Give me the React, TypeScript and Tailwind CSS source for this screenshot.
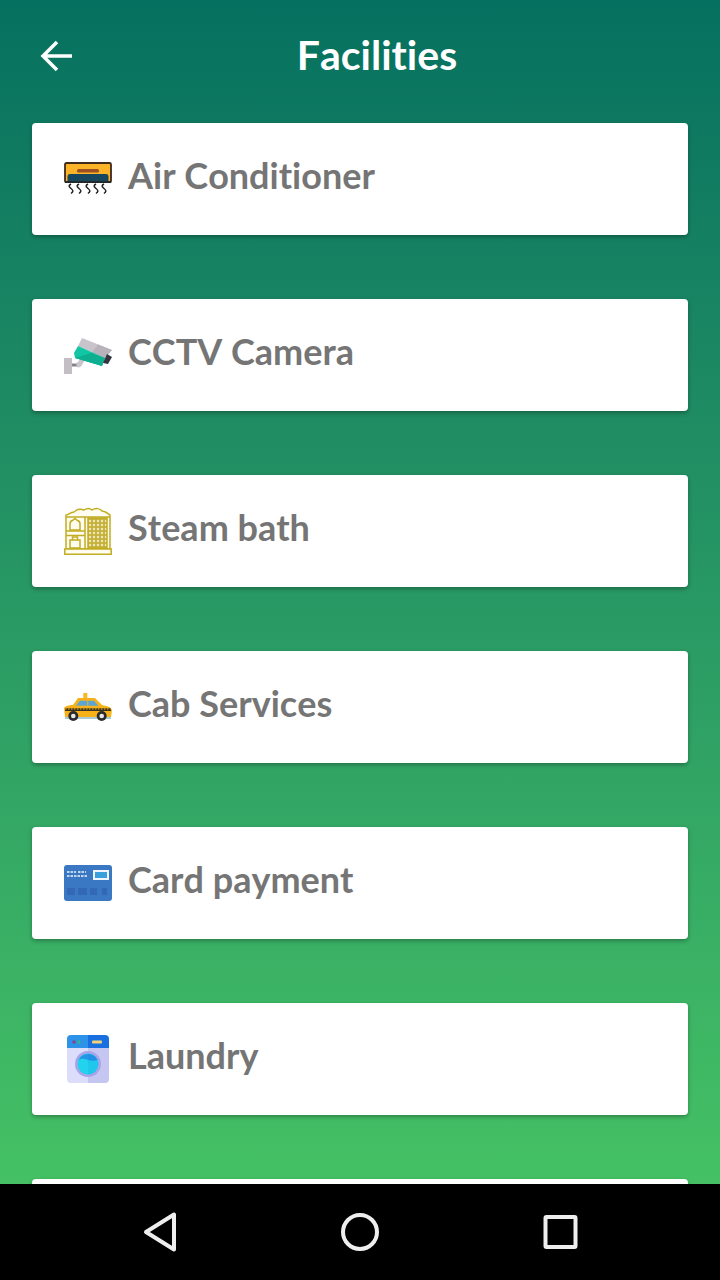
import React from 'react';

const AirConditionerIcon = () => (
  <svg width="48" height="34" viewBox="0 0 48 34">
    <path d="M1 2.500A1.500 1.500 0 0 1 2.500 1h43A1.500 1.500 0 0 1 47 2.500V19a1 1 0 0 1-1 1H2a1 1 0 0 1-1-1z" fill="#fbb327" stroke="#3f2a1c" strokeWidth="1.800" />
    <rect x="13" y="7" width="22" height="3.500" rx="1.500" fill="#9b4f22" />
    <path d="M3.500 20v-5.500a2.500 2.500 0 0 1 2.500-2.500h36a2.500 2.500 0 0 1 2.500 2.500V20z" fill="#17465f" />
    <path d="M1 20h46" stroke="#23282b" strokeWidth="2" />
    {[6, 14, 23, 31, 39].map((x) => (
      <path key={x} d={`M${x + 1} 22c-2.500 1.500-2.500 2.500 0 4.500s2.500 3 0 5`} fill="none" stroke="#242424" strokeWidth="1.500" />
    ))}
  </svg>
);

const CctvIcon = () => (
  <svg width="48" height="38" viewBox="0 0 48 38">
    <rect x="0" y="22" width="8" height="16" fill="#c3bdc4" />
    <path d="M8 29h7" stroke="#85828a" strokeWidth="3" />
    <path d="M13 31c2 1 4 0 5-2l4-7-4-2-4 6-2 1z" fill="#c9c5cb" />
    <path d="M18 2l30 12-7 8-27-12z" fill="#c9c3cb" />
    <path d="M34 8.500l14 5.500-7 8-13-5.500z" fill="#b8b2bb" />
    <path d="M14 10l-4 7 1 5 27 8 3-8z" fill="#12c6a4" />
    <path d="M11 22l27 8 3-8-14-5z" fill="#0daf90" />
    <path d="M43 18l5 3-4 7-5-1z" fill="#35353f" />
  </svg>
);

const SteamBathIcon = () => (
  <svg width="48" height="48" viewBox="0 0 48 48" fill="none" stroke="#c2ac22" strokeWidth="1.500">
    <defs>
      <pattern id="lattice" width="4" height="4" patternUnits="userSpaceOnUse">
        <rect width="4" height="4" fill="#c4b03a" stroke="none" />
        <path d="M2 .6L3.400 2 2 3.400 .6 2z" fill="#f6f1cf" stroke="none" />
      </pattern>
    </defs>
    <path d="M2 42V8c3 0 4-3 8-3 3-3 7-3 10-2 3-2 6-2 8 0 3-2 8-2 10 1 4 0 6 3 8 4v34z" fill="#fffdf0" />
    <path d="M2 10h44M21 10v32M2 24h19M2 28.500h19" />
    <rect x="24" y="11" width="19" height="30" fill="url(#lattice)" />
    <path d="M6 23v-6a3.500 3.500 0 0 1 2.500-3.500l2.500-2 2.500 2A3.500 3.500 0 0 1 16 17v6z" />
    <path d="M6 41v-8h10v8zM8.500 33v-3h5v3" />
    <path d="M.8 42h46.400v5.200H.8z" fill="#fffdf0" />
  </svg>
);

const TaxiIcon = () => (
  <svg width="48" height="28" viewBox="0 0 48 28">
    <rect x="19.300" y="0" width="4" height="6" fill="#f9b91d" />
    <path d="M0 15c1-2 5-3 9-3l5-7h17l7 7c5 1 9 2 10 5l-1 7H1z" fill="#f7b21b" />
    <path d="M12 12.500l4-4.800h7.300v5zM24.300 7.700H30l4.300 5H24.300z" fill="#5aa5d3" />
    <path d="M1 15.300h46V18H1z" fill="#3b3220" />
    <path d="M1 16h46" stroke="#f7b21b" strokeWidth="1" strokeDasharray="1.500 1.500" />
    <path d="M1 24h46v2H1z" fill="#a6cad6" />
    <circle cx="9.300" cy="23" r="5" fill="#2b2b2b" />
    <circle cx="9.300" cy="23" r="2.300" fill="#e8e8e8" />
    <circle cx="37.700" cy="23" r="5" fill="#2b2b2b" />
    <circle cx="37.700" cy="23" r="2.300" fill="#e8e8e8" />
  </svg>
);

const CardIcon = () => (
  <svg width="48" height="36" viewBox="0 0 48 36">
    <rect x="0" y="0" width="48" height="36" rx="3" fill="#3a78c4" />
    <path d="M3 7h9m2 0h8M3 11h20" stroke="#f0f5fb" strokeWidth="1.500" strokeDasharray="2.500 1" />
    <rect x="29" y="5" width="16" height="10" fill="#f0f5fb" />
    <rect x="31" y="7" width="12" height="6" fill="#3aa0dc" />
    <rect x="3" y="23" width="8" height="7" fill="#3268b5" />
    <rect x="14" y="23" width="9" height="7" fill="#3268b5" />
    <rect x="26" y="23" width="7" height="7" fill="#3268b5" />
    <rect x="38" y="23" width="5" height="7" fill="#3268b5" />
  </svg>
);

const LaundryIcon = () => (
  <svg width="42" height="48" viewBox="0 0 42 48">
    <path d="M0 10h21v38H4a4 4 0 0 1-4-4z" fill="#dcdcfb" />
    <path d="M21 10h21v34a4 4 0 0 1-4 4H21z" fill="#c6c6f2" />
    <path d="M4 0h17v13H0V4a4 4 0 0 1 4-4z" fill="#2d93e8" />
    <path d="M21 0h17a4 4 0 0 1 4 4v9H21z" fill="#1a6fe0" />
    <circle cx="7" cy="7" r="1.700" fill="#8b3f8f" />
    <circle cx="12" cy="7" r="1.700" fill="#34b58c" />
    <rect x="25" y="5.500" width="10" height="3" rx="1" fill="#f1d27a" />
    <circle cx="21" cy="29" r="13" fill="#a9a3ea" />
    <circle cx="21" cy="29" r="10.500" fill="#22d3ee" />
    <path d="M11.500 25c3-2 6-1 9.500 0s7 1 9.500 0a10.500 10.500 0 0 0-19 0z" fill="#2396e6" />
    <path d="M21 39.500a10.500 10.500 0 0 0 0-21z" fill="#1a6fe0" fillOpacity="0.120" />
  </svg>
);

const facilities: { name: string; icon: React.ReactNode }[] = [
  { name: 'Air Conditioner', icon: <AirConditionerIcon /> },
  { name: 'CCTV Camera', icon: <CctvIcon /> },
  { name: 'Steam bath', icon: <SteamBathIcon /> },
  { name: 'Cab Services', icon: <TaxiIcon /> },
  { name: 'Card payment', icon: <CardIcon /> },
  { name: 'Laundry', icon: <LaundryIcon /> },
  // next row is cut off by the nav bar, only its top edge shows
  { name: '', icon: null },
];

export default function App() {
  return (
    <div className="flex flex-col w-[720px] h-[1280px] overflow-hidden font-['Lato','Liberation_Sans',sans-serif] [font-variant-ligatures:no-common-ligatures] [font-kerning:none]">
      <div className="flex-1 min-h-0 overflow-hidden bg-gradient-to-b from-[#05705f] to-[#45c164]">
        {/* header */}
        <div className="flex items-center h-[123px] pb-[11px]">
          <div className="w-[112px] pl-10">
            <svg width="33" height="32" viewBox="0 0 33 32" fill="none" stroke="white" strokeWidth="3.500">
              <path d="M32 16H3M17 2L3 16l14 14" />
            </svg>
          </div>
          <h1 className="flex-1 pr-[78px] mb-[2px] text-center text-[41px] font-bold text-white">Facilities</h1>
        </div>

        {/* list */}
        <div className="flex flex-col gap-16 px-8">
          {facilities.map((item) => (
            <div key={item.name} className="flex items-center shrink-0 h-28 pl-8 gap-4 bg-white rounded-[4px] shadow-[0_2px_4px_rgba(0,0,0,0.3)]">
              <div className="flex justify-center items-center w-12 h-12">{item.icon}</div>
              <span className="mb-2 text-[36px] font-bold text-[#757575]">{item.name}</span>
            </div>
          ))}
        </div>
      </div>

      {/* android nav bar */}
      <div className="flex justify-center items-center shrink-0 gap-[120px] h-24 bg-black">
        <svg width="80" height="48" viewBox="0 0 80 48" fill="none" stroke="#eeeeee" strokeWidth="4" strokeLinejoin="round">
          <path d="M54 6.500v35L26 24z" />
        </svg>
        <svg width="80" height="48" viewBox="0 0 80 48" fill="none" stroke="#eeeeee" strokeWidth="4">
          <circle cx="40" cy="24" r="17" />
        </svg>
        <svg width="80" height="48" viewBox="0 0 80 48" fill="none" stroke="#eeeeee" strokeWidth="4" strokeLinejoin="round">
          <rect x="25.500" y="9" width="30" height="30" rx="1" />
        </svg>
      </div>
    </div>
  );
}
